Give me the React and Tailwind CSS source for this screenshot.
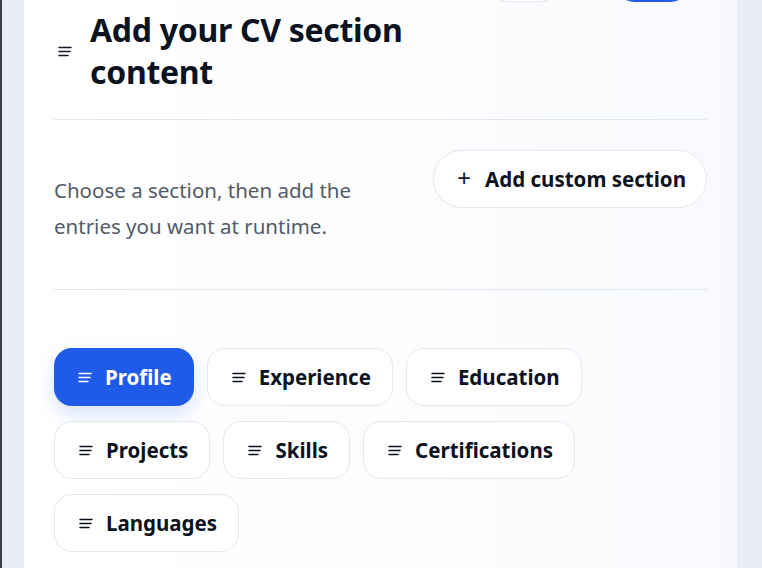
import React from 'react';

const font = { fontFamily: '"Noto Sans", "Liberation Sans", sans-serif' };

function LinesIcon({ className = '' }) {
    return (
        <svg width="15" height="13" viewBox="0 0 15 13" fill="none" className={className}>
            <path d="M1 2.5H13" stroke="currentColor" strokeWidth="1.5" strokeLinecap="round" />
            <path d="M1 6.5H12" stroke="currentColor" strokeWidth="1.5" strokeLinecap="round" />
            <path d="M1 10.5H10" stroke="currentColor" strokeWidth="1.5" strokeLinecap="round" />
        </svg>
    );
}

const sections = ['Profile', 'Experience', 'Education', 'Projects', 'Skills', 'Certifications', 'Languages'];

export default function App() {
    return (
        <div className="min-h-screen w-full flex bg-[#e8edf5] overflow-hidden" style={font}>
            {/* left window edge */}
            <div className="w-[2px] bg-[#3d4047] shrink-0" />
            <div className="w-[22px] shrink-0" />

            {/* Card */}
            <div className="w-[713px] shrink-0 min-h-screen bg-gradient-to-r from-white via-[#fdfdfe] to-[#f7f9fc] px-[30px]">
                {/* Buttons from the row above, cut off */}
                <div className="flex justify-end gap-[51px] pr-[15px] -mt-[42px]">
                    <div className="w-[76px] h-[44px] rounded-full bg-white border border-[#e2e8f0]" />
                    <div className="w-[79px] h-[44px] rounded-full bg-[#1f5ae9]" />
                </div>

                {/* Header */}
                <div className="flex items-center gap-[17px] pt-[7px] pb-[26px] border-b border-[#e2e8f0]">
                    <LinesIcon className="ml-[4px] text-[#111827]" />
                    <h1 className="text-[32px] leading-[42px] font-bold text-[#0b1220] w-[360px] tracking-[-0.3px]">
                        Add your CV section content
                    </h1>
                </div>

                {/* Intro */}
                <div className="flex justify-between items-start pt-[30px] pb-[45px] border-b border-[#e2e8f0]">
                    <p className="mt-[22px] w-[330px] text-[20.5px] leading-[36px] text-[#525b68]">
                        Choose a section, then add the entries you want at runtime.
                    </p>
                    <button className="h-[58px] pl-[23px] pr-[20px] rounded-full bg-white border border-[#e2e8f0] flex items-center gap-[14px] text-[20.5px] font-bold text-[#0b1220]">
                        <span className="text-[24px] font-normal leading-none -mt-[3px]">+</span>
                        Add custom section
                    </button>
                </div>

                {/* Section chips */}
                <div className="flex flex-wrap gap-x-[13px] gap-y-[15px] pt-[58px]">
                    {sections.map((s, i) => (
                        <button
                            key={s}
                            className={
                                i === 0
                                    ? 'h-[58px] pl-[24px] pr-[22px] rounded-[18px] bg-[#1f5ae9] text-white flex items-center gap-[12px] text-[20.5px] font-bold shadow-[0_8px_18px_rgba(37,99,235,0.18)]'
                                    : 'h-[58px] pl-[24px] pr-[21px] rounded-[18px] bg-white border border-[#e2e8f0] text-[#0b1220] flex items-center gap-[12px] text-[20.5px] font-bold'
                            }
                        >
                            <LinesIcon />
                            {s}
                        </button>
                    ))}
                </div>
            </div>

            <div className="flex-1" />
        </div>
    );
}
